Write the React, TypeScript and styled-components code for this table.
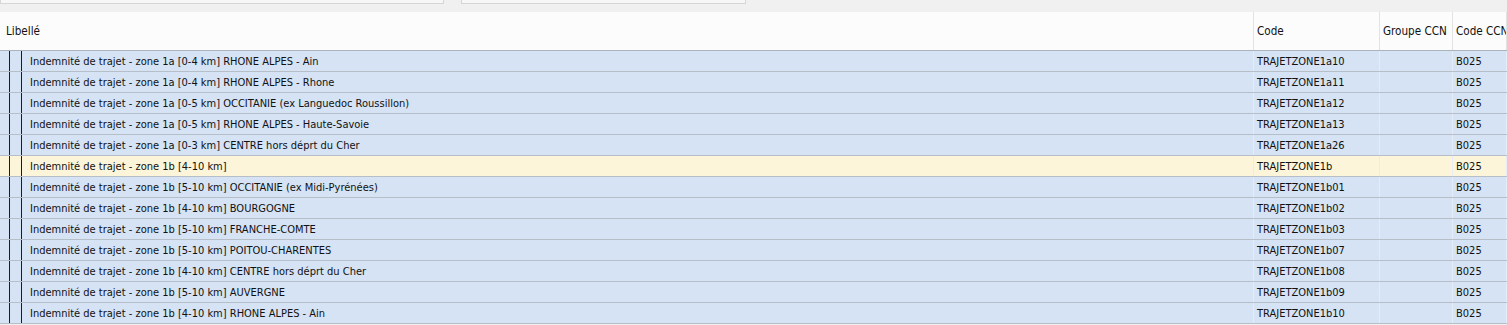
import styled, { createGlobalStyle } from 'styled-components';

const GlobalStyle = createGlobalStyle`
  html, body {
    margin: 0;
    padding: 0;
    background: #f0f0f0;
    overflow: hidden;
  }
  body {
    font-family: 'DejaVu Sans Condensed', 'DejaVu Sans', Tahoma, sans-serif;
    font-stretch: condensed;
    font-size: 11px;
    color: #111;
  }
`;

interface LineItem {
  label: string;
  code: string;
  group?: string;
  ccn: string;
  highlighted?: boolean;
}

const items: LineItem[] = [
  { label: 'Indemnité de trajet - zone 1a [0-4 km] RHONE ALPES - Ain', code: 'TRAJETZONE1a10', ccn: 'B025' },
  { label: 'Indemnité de trajet - zone 1a [0-4 km] RHONE ALPES - Rhone', code: 'TRAJETZONE1a11', ccn: 'B025' },
  { label: 'Indemnité de trajet - zone 1a [0-5 km] OCCITANIE (ex Languedoc Roussillon)', code: 'TRAJETZONE1a12', ccn: 'B025' },
  { label: 'Indemnité de trajet - zone 1a [0-5 km] RHONE ALPES - Haute-Savoie', code: 'TRAJETZONE1a13', ccn: 'B025' },
  { label: 'Indemnité de trajet - zone 1a [0-3 km] CENTRE hors déprt du Cher', code: 'TRAJETZONE1a26', ccn: 'B025' },
  { label: 'Indemnité de trajet - zone 1b [4-10 km]', code: 'TRAJETZONE1b', ccn: 'B025', highlighted: true },
  { label: 'Indemnité de trajet - zone 1b [5-10 km] OCCITANIE (ex Midi-Pyrénées)', code: 'TRAJETZONE1b01', ccn: 'B025' },
  { label: 'Indemnité de trajet - zone 1b [4-10 km] BOURGOGNE', code: 'TRAJETZONE1b02', ccn: 'B025' },
  { label: 'Indemnité de trajet - zone 1b [5-10 km] FRANCHE-COMTE', code: 'TRAJETZONE1b03', ccn: 'B025' },
  { label: 'Indemnité de trajet - zone 1b [5-10 km] POITOU-CHARENTES', code: 'TRAJETZONE1b07', ccn: 'B025' },
  { label: 'Indemnité de trajet - zone 1b [4-10 km] CENTRE hors déprt du Cher', code: 'TRAJETZONE1b08', ccn: 'B025' },
  { label: 'Indemnité de trajet - zone 1b [5-10 km] AUVERGNE', code: 'TRAJETZONE1b09', ccn: 'B025' },
  { label: 'Indemnité de trajet - zone 1b [4-10 km] RHONE ALPES - Ain', code: 'TRAJETZONE1b10', ccn: 'B025' },
];

const COLUMNS = '1254px 126px 73px 1fr';

const Toolbar = styled.div`
  display: flex;
  align-items: flex-start;
  height: 12px;
  background: #f0f0f0;
`;

const Field = styled.div<{ $width: number; $offset?: number }>`
  width: ${(p) => p.$width}px;
  margin-left: ${(p) => p.$offset ?? 0}px;
  height: 4px;
  box-sizing: border-box;
  background: #f7f7f7;
  border: 1px solid #d6d6d6;
  border-top: none;
`;

const Grid = styled.div`
  background: #fcfcfc;
  border-left: 1px solid #dcdcdc;
  margin-left: 1px;
`;

const HeaderRow = styled.div`
  display: grid;
  grid-template-columns: ${COLUMNS};
  height: 39px;
  box-sizing: border-box;
  border-bottom: 1px solid #aab3bc;
  background: #fcfcfc;
  margin-left: -2px;
`;

const HeaderCell = styled.div`
  display: flex;
  align-items: center;
  padding-left: 6px;
  font-size: 11.6px;
  border-right: 1px solid #e2e2e2;
  white-space: nowrap;
  overflow: hidden;
  &:not(:first-child) {
    padding-left: 3px;
  }
`;

const Row = styled.div<{ $highlighted?: boolean }>`
  display: grid;
  grid-template-columns: ${COLUMNS};
  height: 21px;
  box-sizing: border-box;
  border-bottom: 1px solid #b6bec7;
  background: ${(p) => (p.$highlighted ? '#fcf5d9' : '#d5e3f5')};
  margin-left: -2px;
`;

const Cell = styled.div`
  display: flex;
  align-items: center;
  padding-left: 3px;
  border-right: 1px solid #e6edf7;
  white-space: nowrap;
  overflow: hidden;
`;

const LabelCell = styled(Cell)`
  padding-left: 0;
  align-items: stretch;
`;

const Guide = styled.span<{ $width: number }>`
  flex: none;
  width: ${(p) => p.$width}px;
  box-sizing: border-box;
  border-right: 1px solid #1c1c1c;
`;

const LabelText = styled.span`
  display: flex;
  align-items: center;
  padding-left: 8px;
`;

export default function App() {
  return (
    <>
      <GlobalStyle />
      <Toolbar>
        <Field $width={444} />
        <Field $width={285} $offset={17} />
      </Toolbar>
      <Grid>
        <HeaderRow>
          <HeaderCell>Libellé</HeaderCell>
          <HeaderCell>Code</HeaderCell>
          <HeaderCell>Groupe CCN</HeaderCell>
          <HeaderCell>Code CCN</HeaderCell>
        </HeaderRow>
        {items.map((item) => (
          <Row key={item.code} $highlighted={item.highlighted}>
            <LabelCell>
              <Guide $width={10} />
              <Guide $width={12} />
              <LabelText>{item.label}</LabelText>
            </LabelCell>
            <Cell>{item.code}</Cell>
            <Cell>{item.group ?? ''}</Cell>
            <Cell>{item.ccn}</Cell>
          </Row>
        ))}
      </Grid>
    </>
  );
}
